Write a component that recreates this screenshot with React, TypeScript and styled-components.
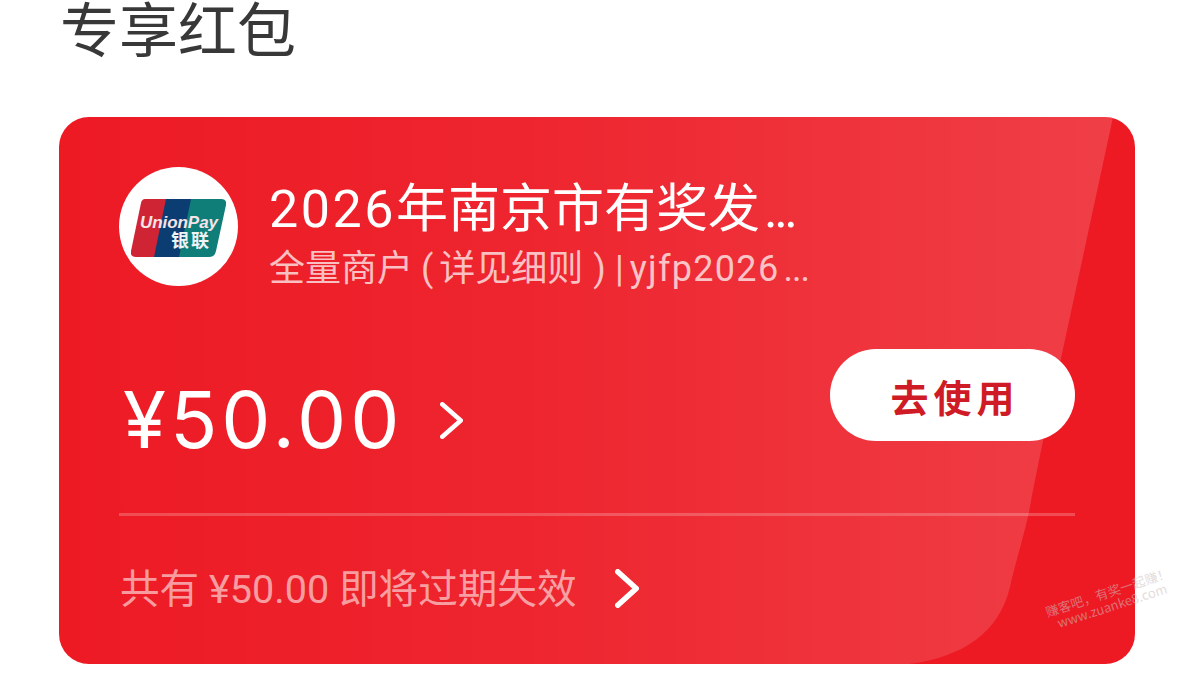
import React from "react";
import styled, { createGlobalStyle } from "styled-components";

const Global = createGlobalStyle`
  html, body { margin: 0; padding: 0; background: #fff; overflow: hidden; }
  body { font-family: Roboto, "Noto Sans CJK SC", sans-serif; }
`;
const Page = styled.div`
  position: relative; width: 1194px; height: 674px; overflow: hidden; background: #fff;
  display: flex; flex-direction: column;
`;
const Header = styled.header`
  height: 117px; flex: none; padding-left: 60px; overflow: hidden;
`;
const PageTitle = styled.h1`
  margin: -15px 0 0; font-size: 59px; line-height: 84px; font-weight: 400; color: #383838;
  font-family: "Noto Sans CJK SC", sans-serif;
`;
const Card = styled.section`
  position: relative; flex: none; margin-left: 59px; width: 1076px; height: 547px;
  box-sizing: border-box; padding: 50px 60px 0; border-radius: 30px; overflow: hidden;
  background: #ed1a24; color: #fff; display: flex; flex-direction: column;
`;
const Gloss = styled.svg`
  position: absolute; inset: 0; width: 100%; height: 100%;
`;
const Content = styled.div`
  position: relative; display: flex; flex-direction: column; flex: 1;
`;
const Merchant = styled.div`
  display: flex; align-items: center; gap: 31px; height: 119px;
`;
const Avatar = styled.div`
  width: 119px; height: 119px; border-radius: 50%; background: #fff; flex: none;
  display: flex; align-items: center; justify-content: center; padding-top: 3px; box-sizing: border-box;
`;
const MerchantText = styled.div`
  display: flex; flex-direction: column; gap: 7px; margin-top: 15px;
`;
const MerchantName = styled.div`
  font-size: 52px; line-height: 62px; white-space: nowrap;
  font-family: Roboto, "Noto Sans CJK SC", sans-serif;
`;
const NameDigits = styled.span`
  letter-spacing: 2.5px;
`;
const Dots = styled.span<{ $tight: number }>`
  letter-spacing: ${(p) => p.$tight}px;
  margin-left: 4px;
`;
const MerchantSub = styled.div`
  font-size: 36px; line-height: 42px; color: rgba(255,255,255,.72); white-space: nowrap;
  font-family: Roboto, "Noto Sans CJK SC", sans-serif;
`;
const OpenParen = styled.span`
  padding: 0 6px 0 8px;
`;
const CloseParen = styled.span`
  padding: 0 9px 0 10px;
`;
const SubCode = styled.span`
  letter-spacing: 1.3px; margin-left: 6px;
`;
const AmountRow = styled.div`
  display: flex; align-items: center; justify-content: space-between; margin-top: 63px; height: 92px;
`;
const Amount = styled.div`
  display: flex; align-items: center; gap: 37px; margin-top: 50px;
`;
const AmountValue = styled.div`
  font-size: 78px; line-height: 80px; font-weight: 400; letter-spacing: 4px; padding-left: 4px;
  font-family: Inter, sans-serif;
`;
const UseButton = styled.div`
  width: 245px; height: 92px; border-radius: 46px; background: #fff; color: #cf1b25;
  display: flex; align-items: center; justify-content: center; padding-left: 5px; box-sizing: border-box;
  font-size: 38px; font-weight: 700; letter-spacing: 5px; font-family: "Noto Sans CJK SC", sans-serif;
`;
const Divider = styled.div`
  height: 3px; margin-top: 72px; background: rgba(255,255,255,.22);
`;
const Expire = styled.div`
  display: flex; align-items: center; gap: 39px; margin-top: 49px; padding-left: 1px;
`;
const ExpireText = styled.div`
  font-size: 39.6px; line-height: 50px; color: rgba(255,255,255,.58);
  font-family: Roboto, "Noto Sans CJK SC", sans-serif;
`;
const ExpireArrow = styled.span`
  display: flex; margin-top: -4px;
`;
const Watermark = styled.div`
  position: absolute; left: 1045px; top: 585px; transform: rotate(-18deg);
  color: rgba(205,190,190,.55); font-size: 13px; line-height: 14px; white-space: nowrap; text-align: center;
  font-family: "Noto Sans CJK SC", sans-serif;
`;
const LogoText = styled.text`
  font-family: "Liberation Sans", sans-serif; font-weight: 700; font-style: italic;
`;
const LogoCjk = styled.text`
  font-family: "Noto Sans CJK SC", sans-serif; font-weight: 700;
`;

const Chevron = ({ w, h, sw }: { w: number; h: number; sw: number }) => (
  <svg width={w} height={h} viewBox={`0 0 ${w} ${h}`} fill="none">
    <path d={`M${sw / 2} ${sw / 2}L${w - sw / 2} ${h / 2}L${sw / 2} ${h - sw / 2}`} stroke="#fff" strokeWidth={sw} strokeLinecap="round" strokeLinejoin="round" />
  </svg>
);

const UnionPayLogo = () => (
  <svg width="95" height="58" viewBox="0 0 95 58">
    <path d="M14 0H36L24 58H5Q-1 58 0 52L10 4Q11 0 14 0z" fill="#cf2434" />
    <path d="M35 0H61L49 58H23z" fill="#0b3d73" />
    <path d="M60 0H90Q96 0 95 6L85 52Q84 58 78 58H48z" fill="#0f7d78" />
    <LogoText x="9" y="29" fontSize="17" fill="#f6e4e8" textLength="78">UnionPay</LogoText>
    <LogoCjk x="40" y="48" fontSize="18" fill="#eef3f6" textLength="38">银联</LogoCjk>
  </svg>
);

export default function App() {
  return (
    <Page>
      <Global />
      <Header><PageTitle>专享红包</PageTitle></Header>
      <Card>
        <Gloss viewBox="0 0 1076 547" preserveAspectRatio="none">
          <defs>
            <linearGradient id="g" x1="0" x2="1" y1="0" y2="0">
              <stop offset="0" stopColor="#fff" stopOpacity="0" />
              <stop offset=".45" stopColor="#fff" stopOpacity=".05" />
              <stop offset="1" stopColor="#fff" stopOpacity=".16" />
            </linearGradient>
          </defs>
          <path d="M0 0H1054L1004 232C995 275 982 330 970 395C962 430 955 450 951 470C940 515 905 540 850 547H0z" fill="url(#g)" />
        </Gloss>
        <Content>
          <Merchant>
            <Avatar><UnionPayLogo /></Avatar>
            <MerchantText>
              <MerchantName><NameDigits>2026</NameDigits>年南京市有奖发<Dots $tight={-3.5}>...</Dots></MerchantName>
              <MerchantSub>全量商户<OpenParen>(</OpenParen>详见细则<CloseParen>)</CloseParen>|<SubCode>yjfp2026</SubCode><Dots $tight={-1}>...</Dots></MerchantSub>
            </MerchantText>
          </Merchant>
          <AmountRow>
            <Amount>
              <AmountValue>¥50.00</AmountValue>
              <Chevron w={23} h={37} sw={4.5} />
            </Amount>
            <UseButton>去使用</UseButton>
          </AmountRow>
          <Divider />
          <Expire>
            <ExpireText>共有 ¥50.00 即将过期失效</ExpireText>
            <ExpireArrow><Chevron w={24} h={39} sw={5.5} /></ExpireArrow>
          </Expire>
        </Content>
      </Card>
      <Watermark>赚客吧，有奖一起赚！<br />www.zuanke8.com</Watermark>
    </Page>
  );
}
